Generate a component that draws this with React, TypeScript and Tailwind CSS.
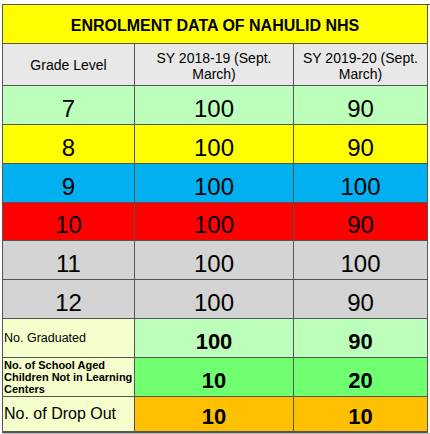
const rows = [
  { label: "7", a: "100", b: "90", bg: "bg-[#bbffbb]", h: "h-[39px]" },
  { label: "8", a: "100", b: "90", bg: "bg-[#ffff00]", h: "h-[39px]" },
  { label: "9", a: "100", b: "100", bg: "bg-[#00b0f0]", h: "h-[39px]" },
  { label: "10", a: "100", b: "90", bg: "bg-[#ff0000]", h: "h-[38px]" },
  { label: "11", a: "100", b: "100", bg: "bg-[#d4d4d4]", h: "h-[39px]" },
  { label: "12", a: "100", b: "90", bg: "bg-[#d4d4d4]", h: "h-[39px]" },
];

const cell = "border-r border-b border-[#555555] flex items-center justify-center";

export default function App() {
  return (
    <main className="min-h-[434px] bg-white pt-[4px] pl-[2px] font-['Liberation_Sans',Arial,sans-serif] text-black">
      <div className="grid w-[428px] grid-cols-[132px_159px_134px] border-l border-t border-[#555555] shadow-[1px_1px_1px_#bdbdbd]">
        <div className={`${cell} col-span-3 h-[39px] bg-[#ffff00] pt-[3px] text-[16px] font-bold`}>
          ENROLMENT DATA OF NAHULID NHS
        </div>

        <div className={`${cell} h-[42px] bg-[#e8e8e8] pt-[2px] text-[14px]`}>Grade Level</div>
        <div className={`${cell} h-[42px] bg-[#e8e8e8] pt-[2px] text-center text-[14px] leading-[16px]`}>
          SY 2018-19 (Sept.<br />March)
        </div>
        <div className={`${cell} h-[42px] bg-[#e8e8e8] pt-[2px] text-center text-[14px] leading-[16px]`}>
          SY 2019-20 (Sept.<br />March)
        </div>

        {rows.map((r) => (
          <div key={r.label} className="contents">
            <div className={`${cell} ${r.bg} ${r.h} pt-[7px] text-[24px]`}>{r.label}</div>
            <div className={`${cell} ${r.bg} ${r.h} pt-[7px] text-[24px]`}>{r.a}</div>
            <div className={`${cell} ${r.bg} ${r.h} pt-[7px] text-[24px]`}>{r.b}</div>
          </div>
        ))}

        <div className="flex h-[39px] items-center border-r border-b border-[#555555] bg-[#f4ffcc] pl-[1px] text-[12.5px]">
          No. Graduated
        </div>
        <div className={`${cell} h-[39px] bg-[#bbffbb] pt-[6px] text-[22px] font-bold`}>100</div>
        <div className={`${cell} h-[39px] bg-[#bbffbb] pt-[6px] text-[22px] font-bold`}>90</div>

        <div className="flex h-[39px] items-center border-r border-b border-[#555555] bg-[#f4ffcc] pl-[1px] text-[11px] font-bold leading-[12px]">
          No. of School Aged Children Not in Learning Centers
        </div>
        <div className={`${cell} h-[39px] bg-[#70ff70] pt-[6px] text-[22px] font-bold`}>10</div>
        <div className={`${cell} h-[39px] bg-[#70ff70] pt-[6px] text-[22px] font-bold`}>20</div>

        <div className="flex h-[36px] items-center border-r border-b-2 border-[#555555] bg-[#f4ffcc] pl-[1px] text-[16px]">
          No. of Drop Out
        </div>
        <div className={`${cell} h-[36px] border-b-2 bg-[#ffc000] pt-[4px] text-[22px] font-bold`}>10</div>
        <div className={`${cell} h-[36px] border-b-2 bg-[#ffc000] pt-[4px] text-[22px] font-bold`}>10</div>
      </div>
    </main>
  );
}
